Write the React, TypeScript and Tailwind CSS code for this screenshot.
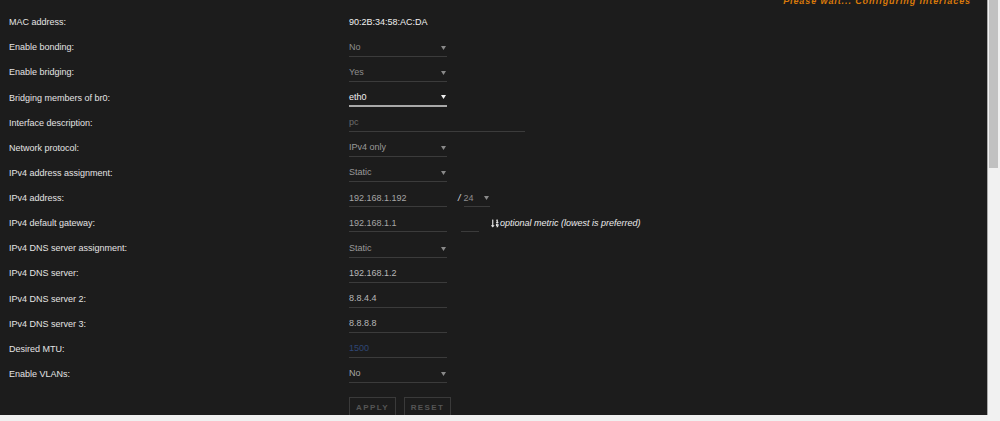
import type { ReactNode } from 'react'
import { FaSortNumericDown } from 'react-icons/fa'

function Caret({ light }: { light?: boolean }) {
  return (
    <svg width="5" height="4" viewBox="0 0 5 4" className="mr-[1px] shrink-0">
      <polygon points="0,0 5,0 2.5,4" fill={light ? '#f0f0f0' : '#8a8a8a'} />
    </svg>
  )
}

function Select({ value, active, tone = 'text-[#8d8d8d]', width = 'w-[98px]' }: { value: string; active?: boolean; tone?: string; width?: string }) {
  return (
    <div
      className={`${width} h-[17px] flex items-center justify-between ${
        active ? 'border-b-2 border-[#a8a8a8] text-[#f2f2f2]' : `border-b border-[#3b3b3b] ${tone}`
      }`}
    >
      <span>{value}</span>
      <Caret light={active} />
    </div>
  )
}

function Field({ value, tone = 'text-[#a6a6a6]', width = 'w-[98px]' }: { value: string; tone?: string; width?: string }) {
  return (
    <div className={`${width} h-[17px] flex items-center border-b border-[#3b3b3b] ${tone}`}>
      {value}
    </div>
  )
}

const rows: { label: string; control: ReactNode }[] = [
  { label: 'MAC address:', control: <span className="text-[#f0f0f0]">90:2B:34:58:AC:DA</span> },
  { label: 'Enable bonding:', control: <Select value="No" /> },
  { label: 'Enable bridging:', control: <Select value="Yes" /> },
  { label: 'Bridging members of br0:', control: <Select value="eth0" active /> },
  { label: 'Interface description:', control: <Field value="pc" tone="text-[#6c6c6c]" width="w-[176px]" /> },
  { label: 'Network protocol:', control: <Select value="IPv4 only" tone="text-[#9a9a9a]" /> },
  { label: 'IPv4 address assignment:', control: <Select value="Static" tone="text-[#9a9a9a]" /> },
  {
    label: 'IPv4 address:',
    control: (
      <div className="flex items-center">
        <Field value="192.168.1.192" />
        <span className="ml-[11px] mr-[3px] italic text-[#e0e0e0]">/</span>
        <Select value="24" width="w-[26px]" tone="text-[#8d8d8d]" />
      </div>
    ),
  },
  {
    label: 'IPv4 default gateway:',
    control: (
      <div className="flex items-center">
        <Field value="192.168.1.1" />
        <div className="ml-[14px] w-[18px] h-[17px] border-b border-[#3b3b3b]" />
        <FaSortNumericDown className="ml-[12px] w-[8px] h-[9px] text-[#e8e8e8]" />
        <span className="ml-[1px] italic text-[#ececec]">optional metric (lowest is preferred)</span>
      </div>
    ),
  },
  { label: 'IPv4 DNS server assignment:', control: <Select value="Static" tone="text-[#9a9a9a]" /> },
  { label: 'IPv4 DNS server:', control: <Field value="192.168.1.2" tone="text-[#b8b8b8]" /> },
  { label: 'IPv4 DNS server 2:', control: <Field value="8.8.4.4" tone="text-[#b8b8b8]" /> },
  { label: 'IPv4 DNS server 3:', control: <Field value="8.8.8.8" tone="text-[#b8b8b8]" /> },
  { label: 'Desired MTU:', control: <Field value="1500" tone="text-[#2f4775]" /> },
  { label: 'Enable VLANs:', control: <Select value="No" tone="text-[#a8a8a8]" /> },
]

export default function App() {
  return (
    <div className="w-[1000px] h-[421px] flex overflow-hidden bg-[#f0f0f0] font-['Liberation_Sans',Arial,sans-serif] text-[9px]">
      <div className="flex-1 flex flex-col">
        <div className="relative h-[415px] bg-[#1c1c1c] border-r border-[#a9a9a9] overflow-hidden">
          <div className="absolute top-[-5px] right-[16px] italic font-semibold tracking-[0.9px] text-[#d9790a]">
            Please wait... Configuring interfaces
          </div>

          <div className="pt-[10.4px] pl-[9px]">
            {rows.map((row) => (
              <div key={row.label} className="h-[25.14px] flex items-center">
                <div className="w-[340px] text-[#e4e4e4]">{row.label}</div>
                {row.control}
              </div>
            ))}

            <div className="flex gap-[8px] ml-[340px] mt-[10px]">
              <button className="w-[47px] h-[22px] border border-[#3a3a3a] text-[#555555] text-[8px] font-bold tracking-[1.4px]">
                APPLY
              </button>
              <button className="w-[47px] h-[22px] border border-[#3a3a3a] text-[#555555] text-[8px] font-bold tracking-[1.4px]">
                RESET
              </button>
            </div>
          </div>
        </div>
        <div className="flex-1 bg-[#f0f0f0]" />
      </div>

      <div className="w-[12px] bg-[#f1f1f1] pl-[1px] pr-[2px]">
        <div className="h-[168px] bg-[#c1c1c1]" />
      </div>
    </div>
  )
}
